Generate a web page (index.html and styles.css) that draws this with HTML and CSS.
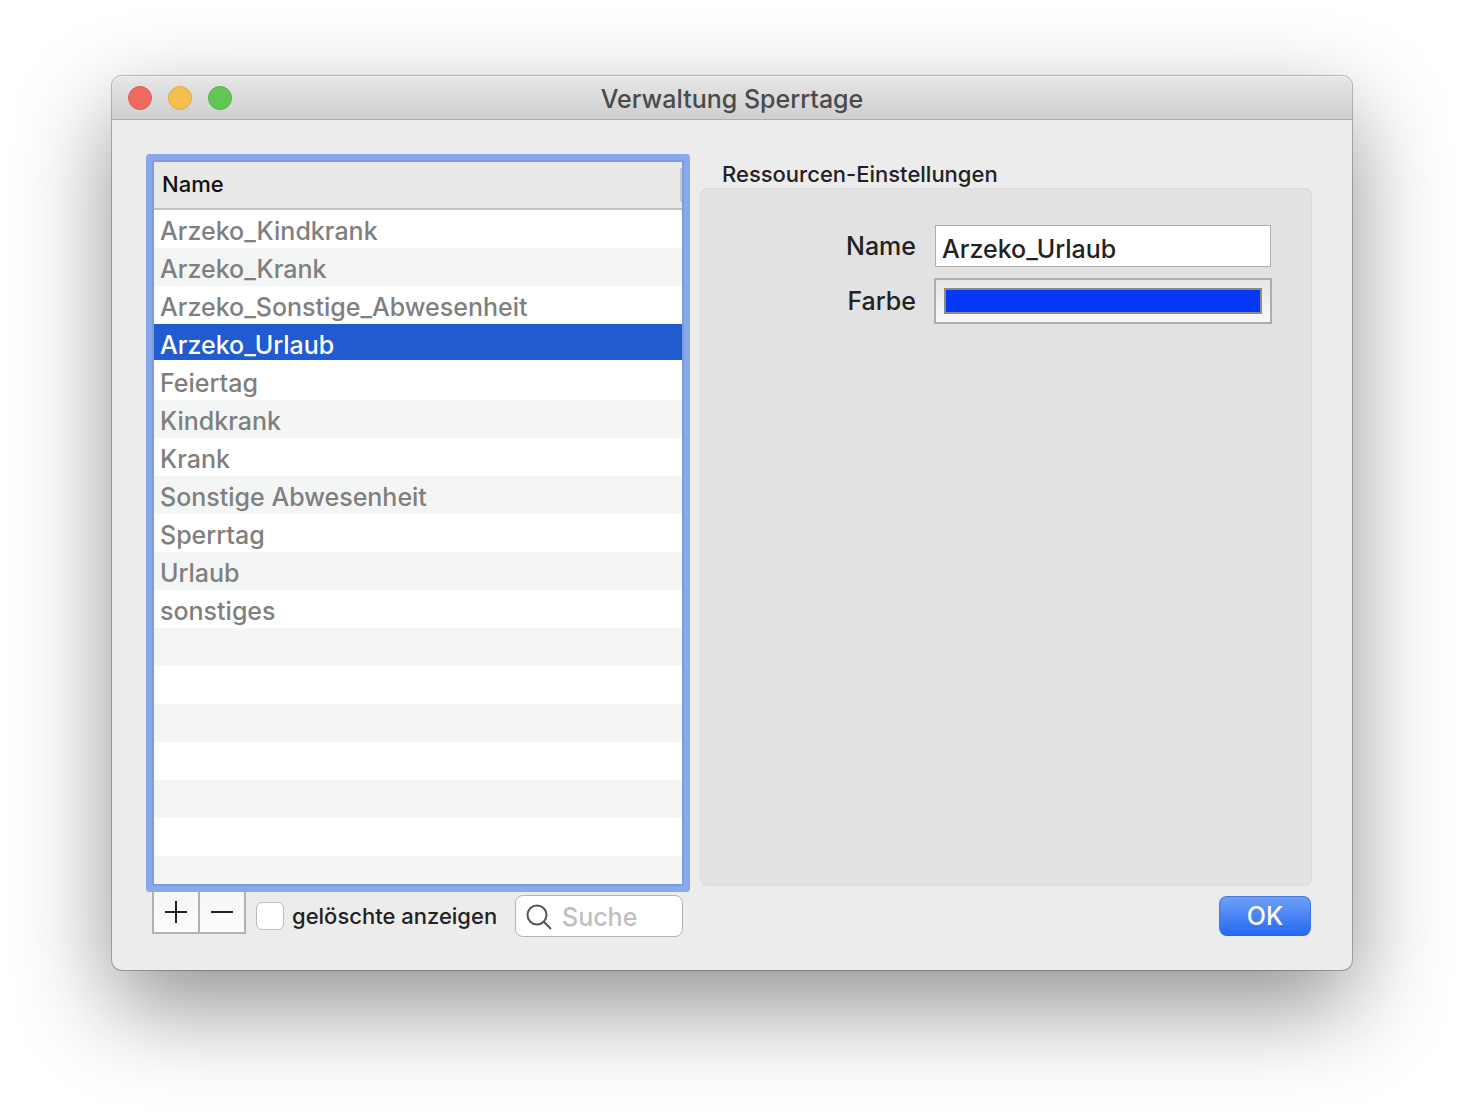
FILE: index.html
```html
<!DOCTYPE html>
<html lang="de">
<head>
<meta charset="utf-8">
<title>Verwaltung Sperrtage</title>
<link rel="stylesheet" href="styles.css">
</head>
<body>
<div class="window">
  <header class="titlebar">
    <div class="lights">
      <button class="light light-close" type="button" aria-label="Schließen"></button>
      <button class="light light-minimize" type="button" aria-label="Minimieren"></button>
      <button class="light light-zoom" type="button" aria-label="Vergrößern"></button>
    </div>
    <h1 class="title">Verwaltung Sperrtage</h1>
  </header>
  <main class="content">
    <div class="list">
      <table class="names">
        <thead>
          <tr><th scope="col">Name</th></tr>
        </thead>
        <tbody>
          <tr><td>Arzeko_Kindkrank</td></tr>
          <tr><td>Arzeko_Krank</td></tr>
          <tr><td>Arzeko_Sonstige_Abwesenheit</td></tr>
          <tr class="selected"><td>Arzeko_Urlaub</td></tr>
          <tr><td>Feiertag</td></tr>
          <tr><td>Kindkrank</td></tr>
          <tr><td>Krank</td></tr>
          <tr><td>Sonstige Abwesenheit</td></tr>
          <tr><td>Sperrtag</td></tr>
          <tr><td>Urlaub</td></tr>
          <tr><td>sonstiges</td></tr>
        </tbody>
      </table>
    </div>
    <section class="settings">
      <h2 class="settings-title">Ressourcen-Einstellungen</h2>
      <form class="panel">
        <label for="name">Name</label>
        <input class="name-input" id="name" type="text" value="Arzeko_Urlaub">
        <label for="color">Farbe</label>
        <input class="color-input" id="color" type="color" value="#0538f7">
      </form>
    </section>
    <div class="list-tools">
      <div class="add-remove">
        <button class="square" type="button" aria-label="Hinzufügen">
          <svg width="24" height="24" viewBox="0 0 24 24"><path d="M1 12H23M12 1V23"/></svg>
        </button>
        <button class="square" type="button" aria-label="Entfernen">
          <svg width="24" height="24" viewBox="0 0 24 24"><path d="M1 12H23"/></svg>
        </button>
      </div>
      <label class="deleted"><input class="check" type="checkbox">gelöschte anzeigen</label>
      <label class="search">
        <svg width="26" height="26" viewBox="0 0 26 26"><circle cx="11" cy="11" r="9.5"/><path d="M17.800 17.800L25 25"/></svg>
        <input class="search-input" type="search" placeholder="Suche" aria-label="Suche">
      </label>
    </div>
    <div class="actions">
      <button class="ok" type="button">OK</button>
    </div>
  </main>
</div>
</body>
</html>
```
FILE: styles.css
```css
* {
  box-sizing: border-box;
}

body {
  margin: 0;
  min-height: 100vh;
  padding: 76px 112px 148px;
  display: flex;
  background: #fff;
  color: #222;
  font: 450 25px/30px Inter, "Liberation Sans", sans-serif;
}

button,
input {
  margin: 0;
  font: inherit;
  color: inherit;
}

h1,
h2 {
  margin: 0;
  font-weight: inherit;
}

.window {
  flex: 1;
  min-width: 0;
  display: flex;
  flex-direction: column;
  border-radius: 10px;
  background: #ececec;
  box-shadow: 0 0 0 1px rgba(0, 0, 0, 0.25), 0 36px 96px rgba(0, 0, 0, 0.44);
}

.titlebar {
  height: 44px;
  padding: 0 16px;
  display: grid;
  grid-template-columns: 1fr auto 1fr;
  align-items: center;
  border-radius: 10px 10px 0 0;
  border-top: 1px solid #f6f6f6;
  border-bottom: 1px solid #aeaeae;
  background: linear-gradient(#e6e6e6, #cfcfcf);
}

.lights {
  display: flex;
  gap: 16px;
}

.light {
  width: 24px;
  height: 24px;
  padding: 0;
  border: 1px solid;
  border-radius: 50%;
}

.light-close {
  background: #ee6a5f;
  border-color: #dc5c52;
}

.light-minimize {
  background: #f5bf4f;
  border-color: #deab45;
}

.light-zoom {
  background: #61c654;
  border-color: #55b047;
}

.title {
  padding-top: 2px;
  font-size: 25px;
  color: #4a4a4a;
}

.content {
  flex: 1;
  padding: 40px 40px 28px;
  display: grid;
  grid-template-columns: 532fr 612fr;
  grid-template-rows: 1fr auto;
  gap: 4px 16px;
}

/* List with focus ring */
.list {
  position: relative;
  z-index: 1;
  border: 2px solid #7f9bd8;
  box-shadow: 0 0 0 6px #88a9ec;
  border-radius: 1px;
  background: repeating-linear-gradient(#fff 0 38px, #f4f5f5 38px 76px) 0 48px;
}

.names {
  width: 100%;
  border-collapse: separate;
  border-spacing: 0;
}

.names th {
  height: 48px;
  padding: 0 8px 2px;
  border-bottom: 2px solid #c2c2c2;
  background: linear-gradient(#c9c9c9, #c9c9c9) right 0 top 6px / 2px 34px no-repeat #e9e9e9;
  color: #111;
  font-size: 22px;
  font-weight: inherit;
  line-height: 28px;
  text-align: left;
}

.names td {
  height: 38px;
  padding: 6px 6px 2px;
  color: #7f7f7f;
}

.names .selected td {
  border-bottom: 2px solid #fff;
  padding-bottom: 0;
  background: #205bd0;
  color: #fff;
}

/* Settings panel */
.settings {
  display: flex;
  flex-direction: column;
}

.settings-title {
  height: 28px;
  padding-left: 22px;
  font-size: 22px;
  line-height: 28px;
}

.panel {
  flex: 1;
  padding: 36px 40px 36px 0;
  display: grid;
  grid-template-columns: 216fr 338fr;
  grid-template-rows: 44px 46px;
  gap: 10px 18px;
  align-items: center;
  border-radius: 8px;
  background: #e2e2e2;
  box-shadow: inset 0 0 0 1px #dadada;
}

.panel label {
  text-align: right;
}

.name-input {
  height: 42px;
  min-width: 0;
  margin: 0 1px;
  padding: 6px 6px 0;
  border: 1px solid #adadad;
  background: #fff;
}

.color-input {
  width: 100%;
  height: 46px;
  padding: 8px;
  border: 2px solid #adadad;
  background: linear-gradient(#e6e6e6, #f8f8f8);
}

.color-input::-webkit-color-swatch-wrapper {
  padding: 0;
}

.color-input::-webkit-color-swatch {
  border: 2px solid #8b8b8b;
  border-radius: 0;
}

/* Bottom controls */
.list-tools {
  height: 52px;
  padding-right: 1px;
  display: flex;
  align-items: center;
  gap: 10px;
}

.add-remove {
  align-self: flex-start;
  display: flex;
}

.square {
  width: 48px;
  height: 44px;
  padding: 0;
  display: grid;
  place-items: center;
  border: 2px solid #b2b2b2;
  background: linear-gradient(#f6f6f6, #fcfcfc);
}

.square + .square {
  margin-left: -2px;
}

.square svg,
.search svg {
  fill: none;
  stroke: #222;
  stroke-width: 2;
}

.deleted {
  display: flex;
  align-items: center;
  gap: 8px;
  font-size: 22px;
  white-space: nowrap;
}

.check {
  appearance: none;
  width: 28px;
  height: 28px;
  border: 1px solid #bdbdbd;
  border-radius: 6px;
  background: #fff;
}

.search {
  width: 168px;
  height: 42px;
  margin-left: auto;
  padding: 2px 10px 0;
  display: flex;
  align-items: center;
  gap: 10px;
  border: 1px solid #b5b5b5;
  border-radius: 8px;
  background: #fff;
}

.search svg {
  flex: none;
  stroke: #555;
}

.search-input {
  min-width: 0;
  width: 100%;
  padding: 0;
  border: 0;
  background: none;
}

.search-input::placeholder {
  color: #bfbfbf;
}

.actions {
  padding-right: 1px;
  display: flex;
  align-items: center;
  justify-content: flex-end;
}

.ok {
  width: 92px;
  height: 40px;
  padding: 0;
  border: 1px solid #4477e0;
  border-bottom-color: #2a5fe0;
  border-radius: 8px;
  background: linear-gradient(#6fa0f6, #2569f3);
  color: #fff;
}
```
